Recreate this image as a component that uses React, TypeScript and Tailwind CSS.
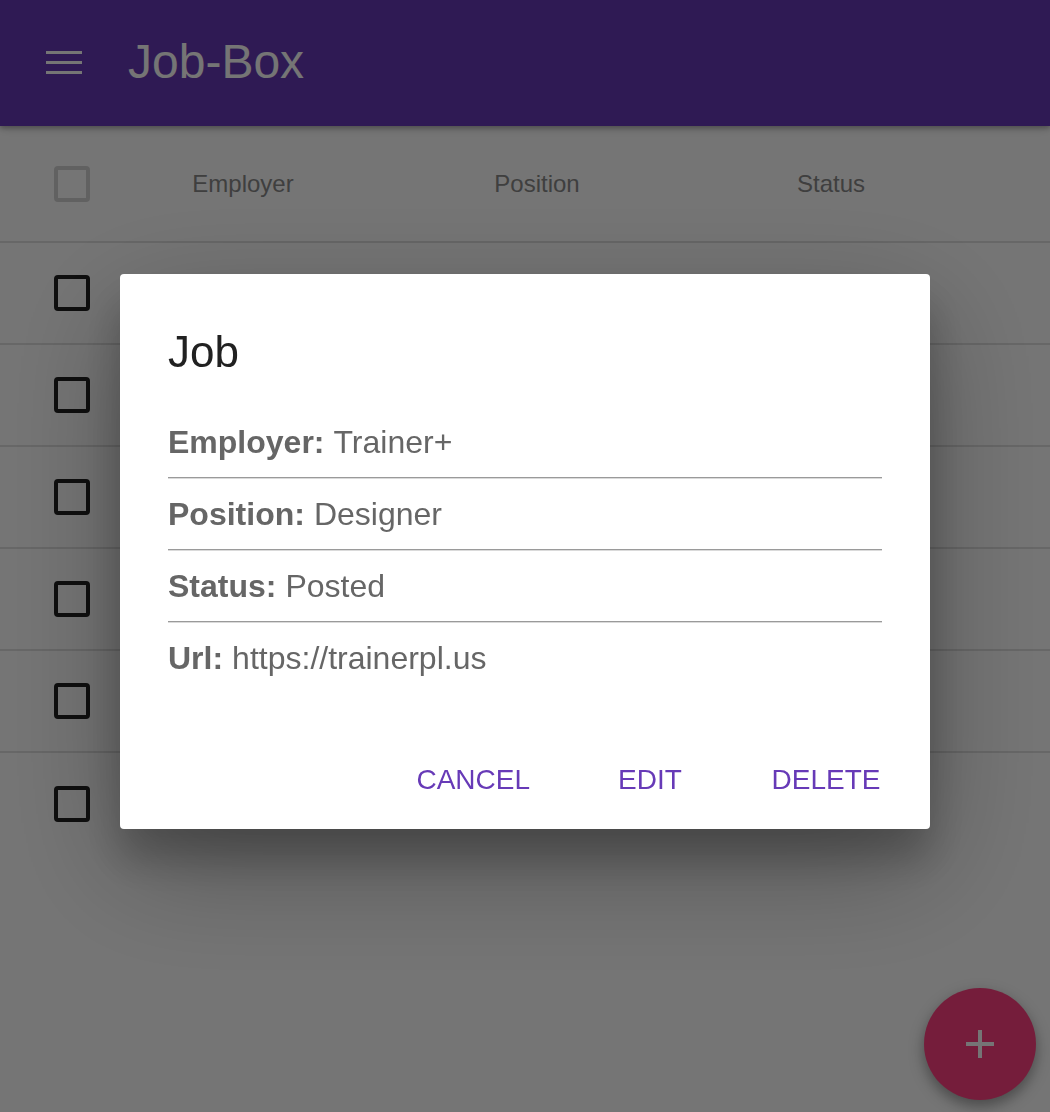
import { useState } from 'react';

const jobs = [
  { id: 1, employer: 'Trainer+', position: 'Designer', status: 'Posted', url: 'https://trainerpl.us' },
  { id: 2, employer: 'Acme', position: 'Developer', status: 'Applied', url: '' },
  { id: 3, employer: 'Globex', position: 'Engineer', status: 'Posted', url: '' },
  { id: 4, employer: 'Initech', position: 'Analyst', status: 'Offer', url: '' },
  { id: 5, employer: 'Hooli', position: 'Manager', status: 'Posted', url: '' },
  { id: 6, employer: 'Umbrella', position: 'Tester', status: 'Applied', url: '' },
];

const Checkbox = ({ muted = false }: { muted?: boolean }) => (
  <div
    className={`w-[36px] h-[36px] rounded-[4px] border-[4px] ${
      muted ? 'border-[#d4d4d4]' : 'border-[#212121]'
    }`}
  />
);

const Field = ({ label, value, divider = true }: { label: string; value: string; divider?: boolean }) => (
  <div>
    <div className="h-[70px] flex items-center text-[32px] text-[#666666]">
      <span className="font-bold">{label}:</span>
      <span className="ml-[9px]">{value}</span>
    </div>
    {divider && (
      <div>
        <div className="h-[1px] bg-[#9a9a9a]" />
        <div className="h-[1px] bg-[#dadada]" />
      </div>
    )}
  </div>
);

export default function App() {
  const [open, setOpen] = useState(true);
  const job = jobs[0];

  return (
    <div className="min-h-[1112px] bg-white" style={{ fontFamily: '"Liberation Sans", Arial, sans-serif' }}>
      {/* App bar */}
      <header className="h-[126px] bg-[#673ab7] flex items-center shadow-[0_2px_10px_rgba(0,0,0,0.16),0_2px_5px_rgba(0,0,0,0.26)] relative z-10">
        <button className="ml-[40px] w-[48px] h-[48px] text-white">
          <svg viewBox="0 0 24 24" width="48" height="48" fill="currentColor">
            <path d="M3 17.5h18V16H3v1.5zm0-5h18V11H3v1.5zM3 6v1.5h18V6H3z" />
          </svg>
        </button>
        <h1 className="ml-[40px] text-[48px] leading-[48px] text-white -mt-[2px]">Job-Box</h1>
      </header>

      {/* Table */}
      <div>
        <div className="h-[117px] grid grid-cols-[96px_294px_294px_294px] items-center border-b-2 border-[#e0e0e0]">
          <div className="pl-[54px]">
            <Checkbox muted />
          </div>
          <div className="text-center text-[24px] text-[#8a8a8a]">Employer</div>
          <div className="text-center text-[24px] text-[#8a8a8a]">Position</div>
          <div className="text-center text-[24px] text-[#8a8a8a]">Status</div>
        </div>
        {jobs.map((j, i) => (
          <div
            key={j.id}
            className={`h-[102px] flex items-center pl-[54px] ${
              i < jobs.length - 1 ? 'border-b-2 border-[#e0e0e0]' : ''
            }`}
          >
            <Checkbox />
          </div>
        ))}
      </div>

      {/* FAB */}
      <button className="fixed right-[14px] bottom-[12px] w-[112px] h-[112px] rounded-full bg-[#ff4081] flex items-center justify-center text-white shadow-[0_6px_20px_rgba(0,0,0,0.19),0_6px_12px_rgba(0,0,0,0.23)]">
        <svg viewBox="0 0 24 24" width="48" height="48" fill="currentColor">
          <path d="M19 13h-6v6h-2v-6H5v-2h6V5h2v6h6v2z" />
        </svg>
      </button>

      {/* Dialog */}
      {open && (
        <div className="fixed inset-0 z-20 bg-black/[0.54] flex justify-center pt-[274px]">
          <div className="w-[810px] h-[555px] bg-white rounded-[4px] flex flex-col shadow-[0_38px_120px_rgba(0,0,0,0.3),0_30px_40px_rgba(0,0,0,0.22)]">
            <h2 className="px-[48px] pt-[46px] text-[44px] leading-[64px] text-[#212121]">Job</h2>
            <div className="px-[48px] mt-[23px]">
              <Field label="Employer" value={job.employer} />
              <Field label="Position" value={job.position} />
              <Field label="Status" value={job.status} />
              <Field label="Url" value={job.url} divider={false} />
            </div>
            <div className="mt-auto flex justify-end px-[16px] pb-[13px]">
              {['CANCEL', 'EDIT', 'DELETE'].map((label) => (
                <button
                  key={label}
                  onClick={() => setOpen(label !== 'CANCEL')}
                  className="min-w-[176px] h-[72px] px-[32px] text-[28px] text-[#673ab7] rounded-[4px]"
                >
                  {label}
                </button>
              ))}
            </div>
          </div>
        </div>
      )}
    </div>
  );
}
